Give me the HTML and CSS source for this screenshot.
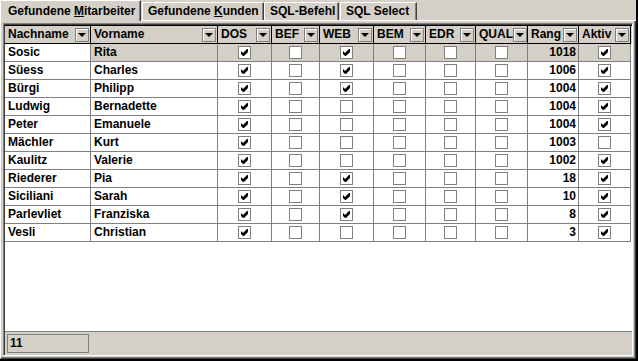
FILE: index.html
```html
<!DOCTYPE html>
<html>
<head>
	<meta charset="UTF-8">
	<title>Gefundene Mitarbeiter</title>
	<link rel="stylesheet" href="styles.css">
</head>
<body>
	<div class="window">
		<div class="tabs">
			<div class="tab active">Gefundene <u>M</u>itarbeiter</div>
			<div class="tab kunden">Gefundene <u>K</u>unden</div>
			<div class="tab befehl">SQL-Befehl</div>
			<div class="tab select">SQL Select</div>
		</div>
		<div class="panel">
			<div class="grid">
				<div class="row head">
					<div class="hc">Nachname<span class="drop"></span></div>
					<div class="hc">Vorname<span class="drop"></span></div>
					<div class="hc">DOS<span class="drop"></span></div>
					<div class="hc">BEF<span class="drop"></span></div>
					<div class="hc">WEB<span class="drop"></span></div>
					<div class="hc">BEM<span class="drop"></span></div>
					<div class="hc">EDR<span class="drop"></span></div>
					<div class="hc">QUAL<span class="drop"></span></div>
					<div class="hc">Rang<span class="drop"></span></div>
					<div class="hc">Aktiv<span class="drop"></span></div>
				</div>
				<div id="rows"></div>
				<div class="filler"></div>
				<div class="status"><div class="count">11</div></div>
			</div>
		</div>
	</div>

	<script type="text/javascript">
		// nachname, vorname, DOS BEF WEB BEM EDR QUAL, rang, aktiv
		var daten=[
			["Sosic","Rita",[1,0,1,0,0,0],1018,1],
			["Süess","Charles",[1,0,1,0,0,0],1006,1],
			["Bürgi","Philipp",[1,0,1,0,0,0],1004,1],
			["Ludwig","Bernadette",[1,0,0,0,0,0],1004,1],
			["Peter","Emanuele",[1,0,0,0,0,0],1004,1],
			["Mächler","Kurt",[1,0,0,0,0,0],1003,0],
			["Kaulitz","Valerie",[1,0,0,0,0,0],1002,1],
			["Riederer","Pia",[1,0,1,0,0,0],18,1],
			["Siciliani","Sarah",[1,0,1,0,0,0],10,1],
			["Parlevliet","Franziska",[1,0,1,0,0,0],8,1],
			["Vesli","Christian",[1,0,0,0,0,0],3,1]
		];
		var haken='<svg width="7" height="7" viewBox="0 0 7 7"><path d="M0 2L2 4L6 0H7V3L3 7H2L0 5Z" fill="#000"/></svg>';

		function box(an){
			return '<div class="cc"><span class="cb">'+(an?haken:'')+'</span></div>';
		}

		var html="";
		for(var i=0;i<daten.length;i++){
			var d=daten[i];
			html+='<div class="row'+(i==0?' current':'')+'">';
			html+='<div class="c first">'+d[0]+'</div>';
			html+='<div class="c">'+d[1]+'</div>';
			for(var j=0;j<d[2].length;j++){
				html+=box(d[2][j]);
			}
			html+='<div class="c num">'+d[3]+'</div>';
			html+=box(d[4]);
			html+='</div>';
		}
		document.getElementById("rows").innerHTML=html;
	</script>
</body>
</html>
```

FILE: styles.css
```css
*{
	box-sizing:border-box;
}

body{
	margin:0;
	background:#d4d0c8;
	font-family:"Liberation Sans",Arial,sans-serif;
	font-size:12px;
	font-weight:bold;
	color:#000;
	overflow:hidden;
}

.window{
	width:638px;
	height:361px;
	display:flex;
	flex-direction:column;
	border-right:2px solid #000;
	border-bottom:2px solid #000;
}

/* reiter oben */
.tabs{
	display:flex;
	align-items:flex-end;
	height:21px;
	border-bottom:1px solid #fff;
	flex:none;
}

.tab{
	height:18px;
	line-height:16px;
	padding-left:5px;
	border-left:1px solid #fff;
	border-top:1px solid #fff;
	border-right:1px solid #404040;
	box-shadow:inset -1px 0 #808080;
	white-space:nowrap;
}

.tab.active{
	width:141px;
	height:21px;
	line-height:20px;
	padding-left:7px;
	margin-bottom:-1px;
	background:#d4d0c8;
	align-self:flex-start;
}

.tab.kunden{
	width:122px;
	margin-left:1px;
}

.tab.befehl{
	width:75px;
}

.tab.select{
	width:77px;
	margin-left:1px;
}

u{
	text-decoration:underline;
	text-underline-offset:1px;
}

/* register-inhalt */
.panel{
	flex:1;
	display:flex;
	padding:2px;
	border-left:1px solid #fff;
	border-right:1px solid #404040;
	border-bottom:1px solid #404040;
	box-shadow:inset -1px -1px #808080;
	min-height:0;
}

.grid{
	flex:1;
	display:flex;
	flex-direction:column;
	border:1px solid;
	border-color:#808080 #fff #fff #808080;
	box-shadow:inset 1px 1px #404040;
	padding:1px 0 0 1px;
	background:#fff;
	min-height:0;
}

.row{
	display:grid;
	grid-template-columns:86px 127px 54px 48px 54px 52px 50px 52px 51px 52px;
	height:18px;
}

.row > div{
	height:18px;
	border-right:1px solid #808080;
	border-bottom:1px solid #808080;
	line-height:17px;
	white-space:nowrap;
	overflow:hidden;
}

.row.head{
	background:#d4d0c8;
	border-top:1px solid #000;
	height:19px;
}

.row.head > div{
	border-color:#000;
	display:flex;
	align-items:center;
	justify-content:space-between;
	padding-left:3px;
	padding-right:1px;
}

.drop{
	width:14px;
	height:14px;
	border:1px solid #808080;
	box-shadow:inset 1px 1px #fff;
	background:#d4d0c8;
	display:flex;
	align-items:center;
	justify-content:center;
	flex:none;
}

.drop:after{
	content:"";
	border-left:4px solid transparent;
	border-right:4px solid transparent;
	border-top:4px solid #000;
	margin-top:1px;
}

.c{
	padding-left:3px;
}

.c.num{
	text-align:right;
	padding-right:2px;
}

.cc{
	display:flex;
	align-items:center;
	justify-content:center;
}

.cb{
	width:13px;
	height:13px;
	border:1px solid #808080;
	background:#fff;
	display:flex;
	align-items:center;
	justify-content:center;
}

.row.current > div{
	background:#d4d0c8;
}

.row.current > div.first{
	background:#fff;
}

.filler{
	flex:1;
	background:#fff;
}

.status{
	height:24px;
	background:#d4d0c8;
	border-top:1px solid #808080;
	padding:2px 2px;
	flex:none;
}

.count{
	width:82px;
	height:19px;
	border:1px solid #808080;
	line-height:17px;
	padding-left:2px;
}
```
